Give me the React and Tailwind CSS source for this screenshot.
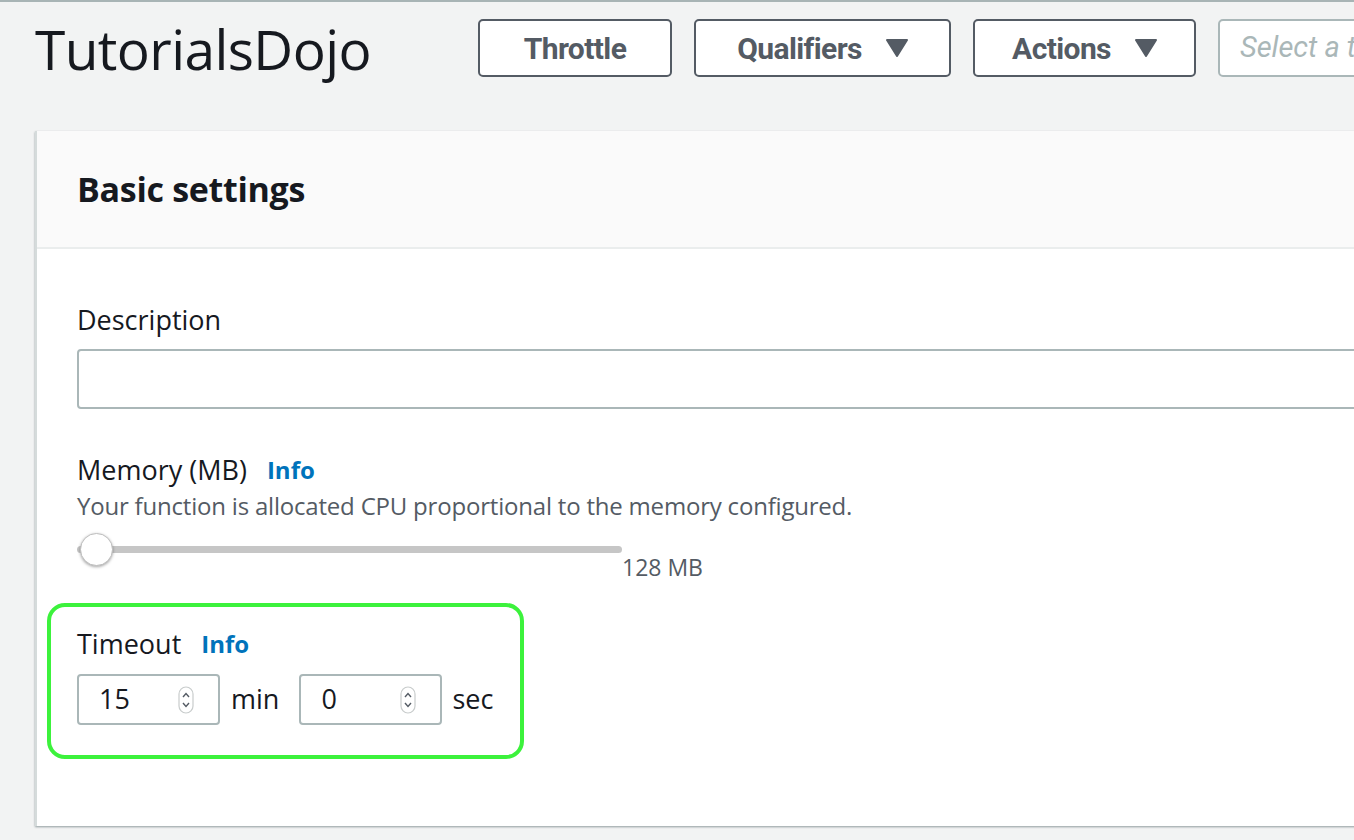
import React from "react";

// Lambda console – basic settings panel

const ui = { fontFamily: '"Open Sans", "Noto Sans", Arial, sans-serif' };
const btn = { fontFamily: 'Roboto, "Liberation Sans", Arial, sans-serif' };

function Caret() {
  return (
    <svg width="22" height="18" viewBox="0 0 22 18" className="ml-6">
      <path d="M1 1 H21 L11 17 Z" fill="#545b64" strokeLinejoin="round" stroke="#545b64" strokeWidth="2" />
    </svg>
  );
}

function HeaderButton({ label, caret, w }) {
  return (
    <button
      type="button"
      style={btn}
      className={`h-[58px] ${w} shrink-0 flex items-center justify-center bg-white border-2 border-[#545b64] rounded-[5px] text-[30px] font-bold text-[#545b64] tracking-[-0.6px]`}
    >
      {label}
      {caret && <Caret />}
    </button>
  );
}

function Spinner() {
  return (
    <svg width="16" height="28" viewBox="0 0 16 28">
      <rect x="1" y="1" width="14" height="26" rx="7" fill="#fff" stroke="#c8cccc" strokeWidth="1.2" />
      <path d="M5 11 L8 7.5 L11 11" fill="none" stroke="#545b64" strokeWidth="1.4" />
      <path d="M5 17 L8 20.5 L11 17" fill="none" stroke="#545b64" strokeWidth="1.4" />
    </svg>
  );
}

function NumberBox({ value }) {
  return (
    <div className="w-[143px] h-[51px] bg-white border-2 border-[#aab7b8] rounded-[4px] flex items-center justify-between pl-[20px] pr-[24px]">
      <span className="text-[27px] text-[#16191f]">{value}</span>
      <Spinner />
    </div>
  );
}

function Info() {
  return <span className="text-[24px] font-bold text-[#0073bb] ml-[20px]">Info</span>;
}

export default function App() {
  return (
    <div style={ui} className="w-[1354px] h-[840px] overflow-hidden bg-[#f2f3f3] border-t-2 border-[#a8b4b5]">
      {/* top bar */}
      <div className="flex items-center h-[94px] pl-[35px] pb-[2px]">
        <h1 style={ui} className="w-[443px] shrink-0 text-[55px] text-[#16191f] tracking-[-0.6px] leading-none">
          TutorialsDojo
        </h1>
        <div className="flex gap-[22px]">
          <HeaderButton label="Throttle" w="w-[194px]" />
          <HeaderButton label="Qualifiers" caret w="w-[257px]" />
          <HeaderButton label="Actions" caret w="w-[223px]" />
          <div
            style={btn}
            className="w-[300px] h-[58px] shrink-0 bg-white border-2 border-[#aab7b8] rounded-[5px] flex items-center pl-[20px] text-[29px] italic text-[#aab7b8] whitespace-nowrap overflow-hidden"
          >
            Select a test event
          </div>
        </div>
      </div>

      {/* card */}
      <div className="ml-[35px] mt-[35px] w-[1400px] h-[695px] bg-white border-l-2 border-[#d5dbdb] shadow-[0_1px_2px_rgba(0,28,36,0.4)]">
        <div className="h-[118px] bg-[#fafafa] border-b-2 border-[#eaeded] flex items-center pl-[40px]">
          <h2 className="text-[34px] font-bold text-[#16191f] tracking-[-0.3px]">Basic settings</h2>
        </div>

        <div className="pl-[40px] pt-[54px]">
          <div className="text-[27px] text-[#16191f] leading-[34px]">Description</div>
          <div className="mt-[12px] h-[60px] w-[1320px] border-2 border-[#aab7b8] rounded-[4px] bg-white" />

          <div className="mt-[44px] flex items-center leading-[34px]">
            <span className="text-[27px] text-[#16191f]">Memory (MB)</span>
            <Info />
          </div>
          <div className="mt-[2px] text-[24px] text-[#545b64] leading-[34px] tracking-[-0.2px]">
            Your function is allocated CPU proportional to the memory configured.
          </div>

          <div className="flex h-[44px] mt-[15px]">
            <div className="relative w-[545px] h-[36px]">
              <div className="absolute left-0 right-0 top-[8px] h-[7px] rounded-full bg-[#c6c6c6]" />
              <div className="absolute left-[3px] top-[-5px] w-[33px] h-[33px] rounded-full bg-white border border-[#bfbfbf] shadow-[0_1px_3px_rgba(0,0,0,0.35)]" />
            </div>
            <span className="text-[23px] text-[#545b64] mt-[14px] leading-[30px]">128 MB</span>
          </div>

          {/* highlighted timeout */}
          <div className="-ml-[30px] mt-[21px] w-[477px] h-[156px] border-[4px] border-[#3cf23c] rounded-[18px] pl-[26px] pt-[18px]">
            <div className="flex items-center leading-[38px]">
              <span className="text-[27px] text-[#16191f]">Timeout</span>
              <Info />
            </div>
            <div className="mt-[11px] flex items-center">
              <NumberBox value="15" />
              <span className="ml-[11px] mr-[20px] text-[27px] text-[#16191f]">min</span>
              <NumberBox value="0" />
              <span className="ml-[10px] text-[27px] text-[#16191f]">sec</span>
            </div>
          </div>
        </div>
      </div>
    </div>
  );
}
